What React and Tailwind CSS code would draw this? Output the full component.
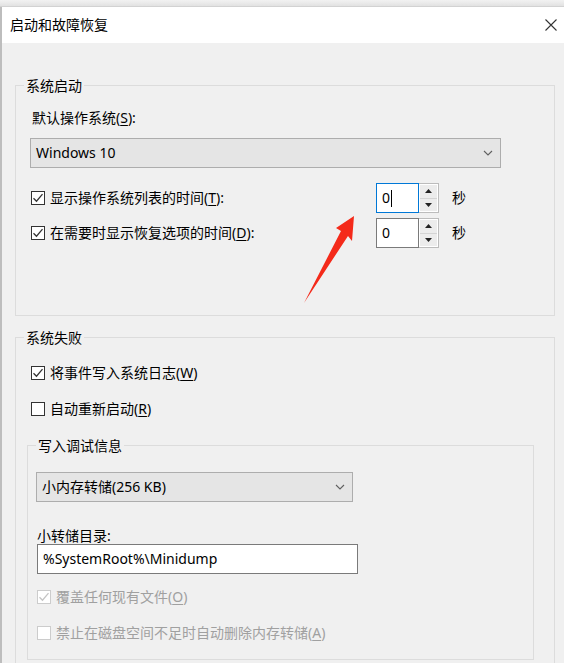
import React from 'react';

const font = "font-['Noto_Sans','Noto_Sans_CJK_SC',sans-serif]";

function Check({ checked, disabled }) {
  const line = disabled ? '#c4c4c4' : '#333333';
  return (
    <span
      className={`flex h-[14px] w-[14px] shrink-0 items-center justify-center border bg-white ${
        disabled ? 'border-[#cccccc]' : 'border-[#333333]'
      }`}
    >
      {checked && (
        <svg width="12" height="12" viewBox="0 0 12 12">
          <path d="M1.5 6.2 L4.5 9.2 L10.5 2.2" fill="none" stroke={line} strokeWidth="1.3" />
        </svg>
      )}
    </span>
  );
}

function Chevron() {
  return (
    <svg width="10" height="6" viewBox="0 0 10 6">
      <path d="M1 1 L5 5 L9 1" fill="none" stroke="#606060" strokeWidth="1.1" />
    </svg>
  );
}

function Combo({ text, width }) {
  return (
    <div
      className={`flex h-[30px] items-center justify-between border border-[#adadad] bg-[#e5e5e5] pl-[5px] pr-[7px] ${width}`}
    >
      <span className="leading-[20px]">{text}</span>
      <Chevron />
    </div>
  );
}

function Group({ label, className, children }) {
  return (
    <div className={`relative border border-[#dcdcdc] ${className}`}>
      <span className="absolute -top-[10px] left-[8px] bg-[#f0f0f0] px-[2px] leading-[20px]">{label}</span>
      {children}
    </div>
  );
}

function Spin({ focused, caret }) {
  return (
    <div className="flex h-[30px] w-[63px]">
      <div
        className={`flex w-[43px] items-center border bg-white pl-[5px] ${
          focused ? 'border-[#0078d7]' : 'border-[#7a7a7a]'
        }`}
      >
        <span className="leading-[20px]">0</span>
        {caret && <span className="ml-[1px] h-[17px] w-[1px] bg-black" />}
      </div>
      <div className="flex w-[20px] flex-col border border-l-0 border-[#bcbcbc] bg-white p-[1px]">
        <div className="flex flex-1 items-center justify-center border-b border-[#d4d4d4] bg-[#ececec]">
          <svg width="7" height="4" viewBox="0 0 7 4">
            <path d="M0 4 L3.5 0 L7 4 Z" fill="#222222" />
          </svg>
        </div>
        <div className="flex flex-1 items-center justify-center bg-[#ececec]">
          <svg width="7" height="4" viewBox="0 0 7 4">
            <path d="M0 0 L3.5 4 L7 0 Z" fill="#222222" />
          </svg>
        </div>
      </div>
    </div>
  );
}

function TimeRow({ label, mnemonic, focused, caret, className }) {
  return (
    <div className={`flex h-[30px] items-center ${className}`}>
      <div className="flex w-[346px] items-center">
        <span className="ml-[1px]">
          <Check checked />
        </span>
        <span className="ml-[5px] leading-[20px]">
          {label}(<span className="underline underline-offset-2">{mnemonic}</span>):
        </span>
      </div>
      <Spin focused={focused} caret={caret} />
      <span className="ml-[13px] leading-[20px]">秒</span>
    </div>
  );
}

function CheckRow({ label, mnemonic, checked, disabled, className }) {
  return (
    <div className={`flex h-[20px] items-center ${className}`}>
      <Check checked={checked} disabled={disabled} />
      <span className={`ml-[5px] leading-[20px] ${disabled ? 'text-[#a0a0a0]' : ''}`}>
        {label}(<span className="underline underline-offset-2">{mnemonic}</span>)
      </span>
    </div>
  );
}

export default function App() {
  return (
    <div className={`relative h-[663px] w-[564px] overflow-hidden bg-[#f0f0f0] text-[14px] text-black ${font}`}>
      <div className="h-[7px] border-b border-[#d2d2d2] bg-gradient-to-b from-[#f2f2f2] to-[#e2e2e2]" />
      <div className="border-l-2 border-[#bdbdbd]">
        <div className="flex h-[36px] items-center justify-between bg-white pl-[8px] pr-[7px]">
          <span className="leading-[20px]">启动和故障恢复</span>
          <svg width="12" height="12" viewBox="0 0 12 12">
            <path d="M0.5 0.5 L11.5 11.5 M11.5 0.5 L0.5 11.5" stroke="#333333" strokeWidth="1.1" />
          </svg>
        </div>

        <div className="pl-[13px] pt-[42px]">
          <Group label="系统启动" className="h-[231px] w-[540px] pl-[14px] pt-[22px]">
            <div className="pl-[2px] leading-[20px]">
              默认操作系统(<span className="underline underline-offset-2">S</span>):
            </div>
            <div className="mt-[10px]">
              <Combo text="Windows 10" width="w-[471px]" />
            </div>
            <TimeRow label="显示操作系统列表的时间" mnemonic="T" focused caret className="mt-[15px]" />
            <TimeRow label="在需要时显示恢复选项的时间" mnemonic="D" className="mt-[5px]" />
          </Group>

          <Group label="系统失败" className="mt-[21px] w-[540px] pb-[12px] pl-[11px] pt-[25px]">
            <CheckRow label="将事件写入系统日志" mnemonic="W" checked className="pl-[4px]" />
            <CheckRow label="自动重新启动" mnemonic="R" className="mt-[16px] pl-[4px]" />

            <Group label="写入调试信息" className="mt-[26px] w-[507px] pb-[16px] pl-[8px] pt-[26px]">
              <Combo text="小内存转储(256 KB)" width="w-[317px]" />
              <div className="mt-[26px] pl-[1px] leading-[16px]">小转储目录:</div>
              <div className="ml-[1px] flex h-[30px] w-[321px] items-center border border-[#7a7a7a] bg-white pl-[5px]">
                <span className="leading-[20px]">%SystemRoot%\Minidump</span>
              </div>
              <CheckRow label="覆盖任何现有文件" mnemonic="O" checked disabled className="mt-[13px] pl-[1px]" />
              <CheckRow
                label="禁止在磁盘空间不足时自动删除内存转储"
                mnemonic="A"
                disabled
                className="mt-[16px] pl-[1px]"
              />
            </Group>
          </Group>
        </div>
      </div>

      {/* red annotation arrow drawn over the dialog */}
      <svg className="pointer-events-none absolute left-0 top-0" width="564" height="663" viewBox="0 0 564 663">
        <polygon
          points="354,216 336,228 341,231 304,303 348,236 352,241"
          fill="#f42a1a"
        />
      </svg>
    </div>
  );
}
